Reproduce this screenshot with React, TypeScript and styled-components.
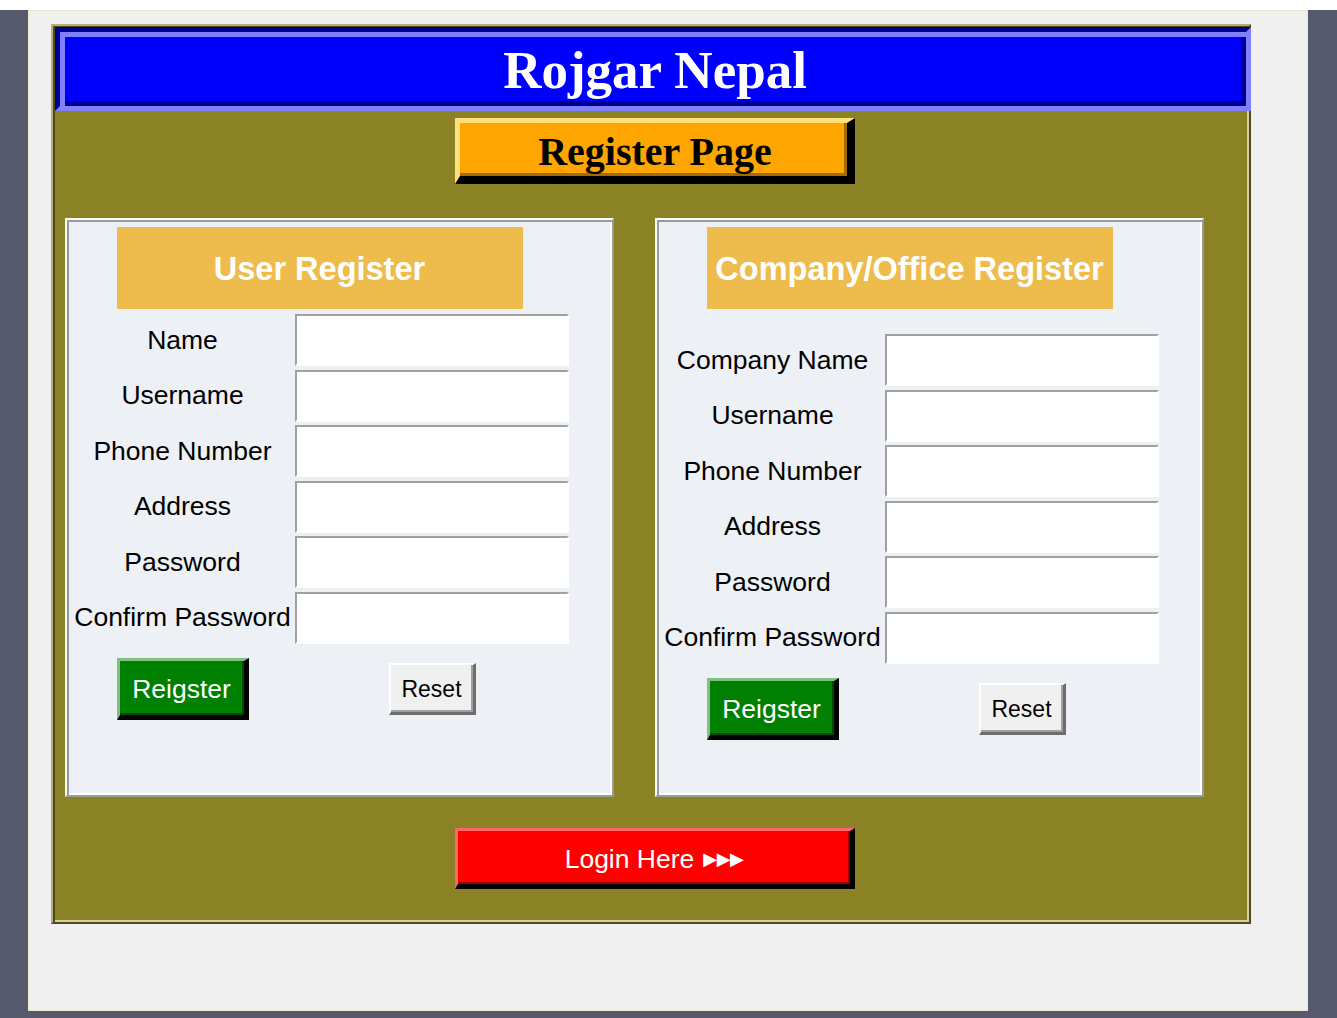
import React from "react";
import styled, { createGlobalStyle } from "styled-components";

const GlobalStyle = createGlobalStyle`
  html, body { margin: 0; padding: 0; background: #555a6e; }
  body { font-family: "Liberation Sans", Arial, sans-serif; }
  *, *::before, *::after { box-sizing: border-box; }
`;

const Page = styled.div`
  border-top: 10px solid #ffffff;
  padding: 0 29px 0 28px;
  min-height: 1018px;
`;

const Sheet = styled.div`
  height: 1001px;
  background: #f0f0f0;
  border: 1px solid #efe7cc;
  padding: 13px 0 0 22px;
`;

const Frame = styled.div`
  width: 1200px;
  height: 900px;
  background: #8a8224;
  border: 2px solid;
  border-color: #b3ae7c #4f4b1c #4f4b1c #b3ae7c;
  box-shadow: inset 2px 2px 0 #4f4b1c, inset -2px -2px 0 #d4cea2;
  padding: 1px 2px 2px 2px;
`;

const Column = styled.div`
  width: 1200px;
  display: flex;
  flex-direction: column;
`;

const Banner = styled.h1`
  margin: 0;
  width: 1196px;
  height: 84px;
  background: #0000ff;
  border: 5px solid;
  border-color: #000090 #8080ff #8080ff #000090;
  box-shadow: inset 5px 5px 0 #8080ff, inset -5px -5px 0 #000090;
  display: flex;
  align-items: center;
  justify-content: center;
  padding: 2px 0 0 4px;
  font: bold 53px "Liberation Serif", "Times New Roman", serif;
  color: #ffffff;
`;

const PageTitle = styled.h2`
  margin: 7px 0 0;
  align-self: center;
  width: 400px;
  height: 66px;
  background: #ffa500;
  border-style: solid;
  border-width: 5px 8px 8px 5px;
  border-color: #ffe07a #000000 #000000 #ffe07a;
  box-shadow: inset -3px -3px 0 #a66b00;
  display: flex;
  align-items: center;
  justify-content: center;
  padding: 4px 0 0 3px;
  font: bold 40px "Liberation Serif", "Times New Roman", serif;
  color: #000000;
`;

const Panels = styled.div`
  margin-top: 34px;
  padding-left: 10px;
  display: flex;
  gap: 41px;
`;

const Panel = styled.section`
  width: 549px;
  height: 579px;
  background: #edf0f5;
  border: 2px solid;
  border-color: #ffffff #9a9a9a #9a9a9a #ffffff;
  box-shadow: inset 2px 2px 0 #9a9a9a, inset -2px -2px 0 #ffffff;
  padding: 7px 0 0 3px;
`;

const Block = styled.div`
  width: 499px;
  display: flex;
  flex-direction: column;
`;

const PanelTitle = styled.h3`
  margin: 0 auto;
  width: 406px;
  height: 82px;
  background: #eebc4c;
  display: flex;
  align-items: center;
  justify-content: center;
  padding-top: 2px;
  font: bold 32.5px "Liberation Sans", Arial, sans-serif;
  color: #ffffff;
  white-space: nowrap;
`;

const FormGrid = styled.div<{ $offset: number }>`
  margin-top: ${(p) => p.$offset}px;
  display: grid;
  grid-template-columns: 225px 274px;
  grid-auto-rows: 52px;
  row-gap: 3.6px;
`;

const Label = styled.label`
  display: flex;
  align-items: center;
  justify-content: center;
  font-size: 26.5px;
  color: #000000;
  white-space: nowrap;
`;

const Field = styled.input`
  width: 274px;
  height: 52px;
  margin: 0;
  background: #ffffff;
  border: 2px solid;
  border-color: #a0a0a0 #ffffff #ffffff #a0a0a0;
  outline: none;
  font-size: 20px;
  font-family: "Liberation Sans", Arial, sans-serif;
`;

const ButtonRow = styled.div`
  margin-top: 14px;
  display: grid;
  grid-template-columns: 225px 274px;
  align-items: center;
  justify-items: center;
  height: 62px;
`;

const SubmitButton = styled.button`
  width: 132px;
  height: 62px;
  margin: 0;
  padding: 3px 0 0;
  background: #008000;
  border-style: solid;
  border-width: 3px 5px 5px 3px;
  border-color: #80c080 #000000 #000000 #80c080;
  box-shadow: inset -2px -2px 0 #004a00;
  font: 26.5px "Liberation Sans", Arial, sans-serif;
  color: #ffffff;
`;

const ResetButton = styled.button`
  width: 87px;
  height: 52px;
  margin: 0;
  padding: 2px 0 0;
  background: #f0f0f0;
  border-style: solid;
  border-width: 2px 3px 3px 2px;
  border-color: #ffffff #6d6d6d #6d6d6d #ffffff;
  box-shadow: inset -2px -2px 0 #a0a0a0;
  font: 23px "Liberation Sans", Arial, sans-serif;
  color: #000000;
`;

const LoginButton = styled.button`
  margin: 31px 0 0;
  align-self: center;
  width: 400px;
  height: 61px;
  padding: 3px 0 0;
  background: #ff0000;
  border-style: solid;
  border-width: 3px 5px 5px 3px;
  border-color: #ff6666 #000000 #000000 #ff6666;
  box-shadow: inset -2px -2px 0 #990000;
  font: 26.5px "Liberation Sans", Arial, sans-serif;
  color: #ffffff;
  display: flex;
  align-items: center;
  justify-content: center;
  gap: 9px;
`;

const Arrows = styled.span`
  font: 18px "DejaVu Sans", sans-serif;
  letter-spacing: -0.5px;
  line-height: 1;
`;

type FormProps = {
  title: string;
  firstLabel: string;
  offset: number;
};

const labelsAfterFirst = [
  "Username",
  "Phone Number",
  "Address",
  "Password",
  "Confirm Password",
];

function RegisterForm({ title, firstLabel, offset }: FormProps) {
  const labels = [firstLabel, ...labelsAfterFirst];
  return (
    <Panel>
      <Block>
        <PanelTitle>{title}</PanelTitle>
        <FormGrid $offset={offset}>
          {labels.map((l) => (
            <React.Fragment key={l}>
              <Label>{l}</Label>
              <Field type={l.includes("Password") ? "password" : "text"} />
            </React.Fragment>
          ))}
        </FormGrid>
        <ButtonRow>
          <SubmitButton type="button">Reigster</SubmitButton>
          <ResetButton type="button">Reset</ResetButton>
        </ButtonRow>
      </Block>
    </Panel>
  );
}

export default function App() {
  return (
    <>
      <GlobalStyle />
      <Page>
        <Sheet>
          <Frame>
            <Column>
              <Banner>Rojgar Nepal</Banner>
              <PageTitle>Register Page</PageTitle>
              <Panels>
                <RegisterForm title="User Register" firstLabel="Name" offset={5} />
                <RegisterForm
                  title="Company/Office Register"
                  firstLabel="Company Name"
                  offset={25}
                />
              </Panels>
              <LoginButton type="button">
                <span>Login Here</span>
                <Arrows>▶▶▶</Arrows>
              </LoginButton>
            </Column>
          </Frame>
        </Sheet>
      </Page>
    </>
  );
}
